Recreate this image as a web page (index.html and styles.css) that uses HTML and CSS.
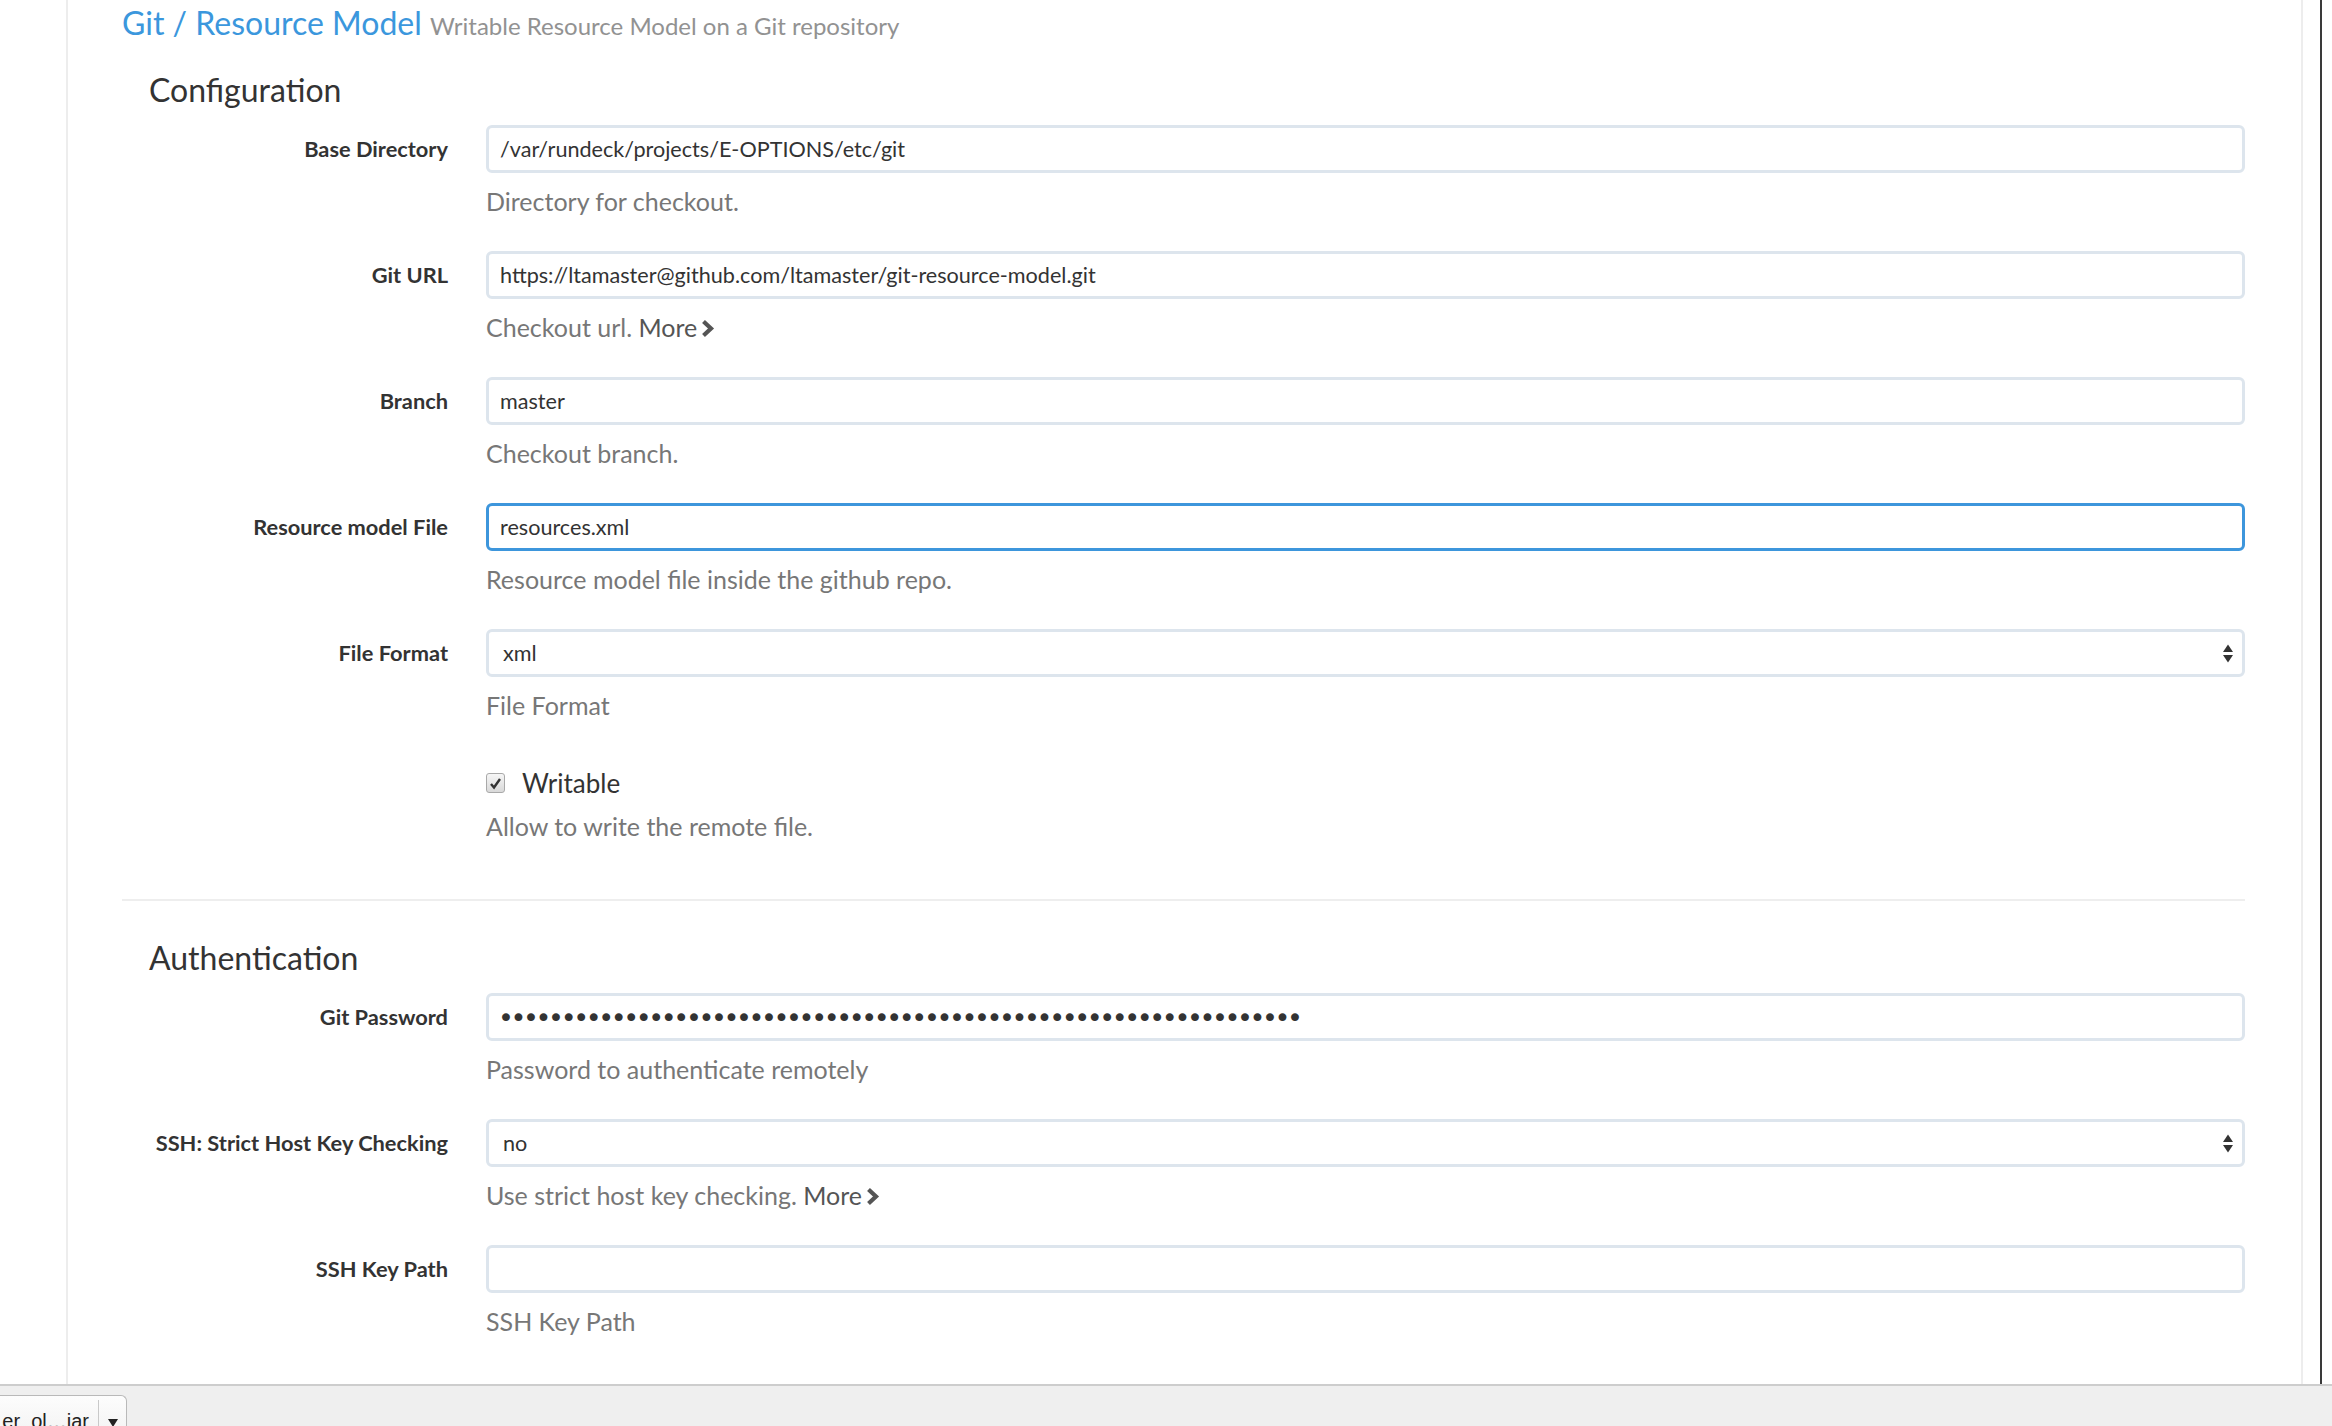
FILE: index.html
```html
<!DOCTYPE html>
<html lang="en">
<head>
<meta charset="utf-8">
<title>Git / Resource Model</title>
<link rel="stylesheet" href="styles.css">
</head>
<body>
<div class="screen">
  <div class="window">
    <div class="panel">
      <div class="page-title"><span class="title">Git / Resource Model</span> <span class="subtitle">Writable Resource Model on a Git repository</span></div>

      <h3 class="section-title">Configuration</h3>

      <div class="form-group">
        <label class="control-label">Base Directory</label>
        <div class="control">
          <input class="form-control" type="text" value="/var/rundeck/projects/E-OPTIONS/etc/git">
          <div class="help">Directory for checkout.</div>
        </div>
      </div>

      <div class="form-group">
        <label class="control-label">Git URL</label>
        <div class="control">
          <input class="form-control" type="text" value="https://ltamaster@github.com/ltamaster/git-resource-model.git">
          <div class="help">Checkout url. <span class="more">More<svg class="chev" width="15" height="19" viewBox="0 0 15 19"><polyline points="3.5,2.5 11,9.5 3.5,16.5" fill="none" stroke="#555" stroke-width="4.2"/></svg></span></div>
        </div>
      </div>

      <div class="form-group">
        <label class="control-label">Branch</label>
        <div class="control">
          <input class="form-control" type="text" value="master">
          <div class="help">Checkout branch.</div>
        </div>
      </div>

      <div class="form-group">
        <label class="control-label">Resource model File</label>
        <div class="control">
          <input class="form-control focused" type="text" value="resources.xml">
          <div class="help">Resource model file inside the github repo.</div>
        </div>
      </div>

      <div class="form-group">
        <label class="control-label">File Format</label>
        <div class="control">
          <div class="select-wrap">
            <select class="form-control select"><option>xml</option></select>
            <svg class="select-arrows" width="10" height="19" viewBox="0 0 10 19"><polygon points="0,8 5,0.5 10,8" fill="#333"/><polygon points="0,11 10,11 5,18.5" fill="#333"/></svg>
          </div>
          <div class="help">File Format</div>
        </div>
      </div>

      <div class="form-group last">
        <div class="control-label"></div>
        <div class="control">
          <div class="checkbox-line">
            <span class="cb"><svg width="13" height="13" viewBox="0 0 13 13"><path d="M2 7 L5 10.5 L11 2" fill="none" stroke="#333" stroke-width="2.4"/></svg></span>
            <span class="cb-label">Writable</span>
          </div>
          <div class="help">Allow to write the remote file.</div>
        </div>
      </div>

      <hr class="divider">

      <h3 class="section-title auth">Authentication</h3>

      <div class="form-group">
        <label class="control-label">Git Password</label>
        <div class="control">
          <input class="form-control password" type="password" value="xxxxxxxxxxxxxxxxxxxxxxxxxxxxxxxxxxxxxxxxxxxxxxxxxxxxxxxxxxxxxxxx">
          <div class="help">Password to authenticate remotely</div>
        </div>
      </div>

      <div class="form-group">
        <label class="control-label">SSH: Strict Host Key Checking</label>
        <div class="control">
          <div class="select-wrap">
            <select class="form-control select"><option>no</option></select>
            <svg class="select-arrows" width="10" height="19" viewBox="0 0 10 19"><polygon points="0,8 5,0.5 10,8" fill="#333"/><polygon points="0,11 10,11 5,18.5" fill="#333"/></svg>
          </div>
          <div class="help">Use strict host key checking. <span class="more">More<svg class="chev" width="15" height="19" viewBox="0 0 15 19"><polyline points="3.5,2.5 11,9.5 3.5,16.5" fill="none" stroke="#555" stroke-width="4.2"/></svg></span></div>
        </div>
      </div>

      <div class="form-group">
        <label class="control-label">SSH Key Path</label>
        <div class="control">
          <input class="form-control" type="text" value="">
          <div class="help">SSH Key Path</div>
        </div>
      </div>
    </div>
    <div class="gap"></div>
    <div class="edge"></div>
  </div>

  <div class="shelf">
    <div class="dl-item">
      <div class="dl-name">er_ol…jar</div>
      <div class="dl-sep"></div>
      <div class="dl-arrow"><svg width="10" height="8" viewBox="0 0 10 8"><polygon points="0,0 10,0 5,8" fill="#222"/></svg></div>
    </div>
  </div>
</div>
</body>
</html>
```

FILE: styles.css
```css
* { box-sizing: border-box; }

html, body {
  margin: 0;
  padding: 0;
  background: #fff;
}

body {
  font-family: Lato, "Open Sans", sans-serif;
  color: #333;
}

.screen {
  width: 2332px;
  height: 1426px;
  display: flex;
  flex-direction: column;
  overflow: hidden;
}

.window {
  flex: 1;
  display: flex;
  min-height: 0;
}

.panel {
  flex: none;
  width: 2237px;
  margin-left: 66px;
  border-left: 2px solid #ededed;
  border-right: 2px solid #ededed;
  padding: 5px 56px 0 54px;
}

.gap { width: 17px; flex: none; }

.edge {
  width: 2px;
  flex: none;
  background: #3a3a3a;
}

/* title */
.page-title {
  height: 36px;
  font-size: 32px;
  line-height: 36px;
  white-space: nowrap;
}

.title { color: #3b97dd; }

.subtitle {
  font-size: 24px;
  line-height: 1;
  color: #929292;
}

.section-title {
  margin: 29px 0 15px;
  padding-left: 27px;
  font-size: 32px;
  line-height: 40px;
  font-weight: 400;
  color: #333;
}

.section-title.auth { margin-top: 37px; }

/* form */
.form-group {
  display: grid;
  grid-template-columns: 326px 1fr;
  column-gap: 38px;
  margin-bottom: 35px;
}

.form-group.last { margin-bottom: 0; }

.control-label {
  text-align: right;
  font-weight: 700;
  font-size: 21.8px;
  line-height: 48px;
  color: #333;
  white-space: nowrap;
}

.form-control {
  display: block;
  width: 100%;
  height: 48px;
  margin: 0;
  border: 3px solid #dde5ed;
  border-radius: 6px;
  padding: 0 11px;
  font-family: Lato, sans-serif;
  font-size: 21.6px;
  color: #333;
  background: #fff;
  outline: none;
}

.form-control.focused { border-color: #3d96dc; }

.form-control.password {
  font-family: "DejaVu Sans", sans-serif;
  font-size: 27px;
  letter-spacing: -3.4px;
  padding-left: 9px;
}

.select-wrap { position: relative; }

.select {
  appearance: none;
  -webkit-appearance: none;
  padding-left: 14px;
}

.select-arrows {
  position: absolute;
  right: 12px;
  top: 14.5px;
}

.help {
  margin-top: 13px;
  font-size: 25px;
  line-height: 30px;
  color: #777;
  white-space: nowrap;
}

.more { color: #555; }

.chev {
  margin-left: 3px;
  vertical-align: -1px;
}

.checkbox-line {
  margin-top: 13px;
  display: flex;
  align-items: center;
  gap: 17px;
  height: 30px;
}

.cb {
  width: 19px;
  height: 20px;
  border: 1px solid #a9a9a9;
  border-radius: 3px;
  background: linear-gradient(#f6f6f6, #d9d9d9);
  display: flex;
  align-items: center;
  justify-content: center;
}

.cb-label {
  font-size: 26px;
  line-height: 30px;
  color: #333;
}

.divider {
  margin: 58px 0 0;
  border: 0;
  border-top: 2px solid #eeeeee;
  height: 0;
}

/* download shelf */
.shelf {
  flex: none;
  height: 42px;
  border-top: 2px solid #cdcdcd;
  background: #efefef;
  display: flex;
  align-items: flex-start;
  padding-top: 9px;
}

.dl-item {
  display: flex;
  width: 127px;
  height: 40px;
  background: linear-gradient(#fdfdfd, #f3f3f3);
  border: 1px solid #b9b9b9;
  border-left: none;
  border-bottom: none;
  border-radius: 0 6px 0 0;
}

.dl-name {
  width: 98px;
  overflow: hidden;
  white-space: nowrap;
  text-align: right;
  padding-top: 15px;
  padding-right: 9px;
  font-family: "Liberation Sans", sans-serif;
  font-size: 20px;
  line-height: 20px;
  color: #222;
}

.dl-sep {
  width: 1px;
  margin-top: 4px;
  background: #c9c9c9;
}

.dl-arrow {
  flex: 1;
  display: flex;
  justify-content: center;
  padding-top: 23px;
}
```
